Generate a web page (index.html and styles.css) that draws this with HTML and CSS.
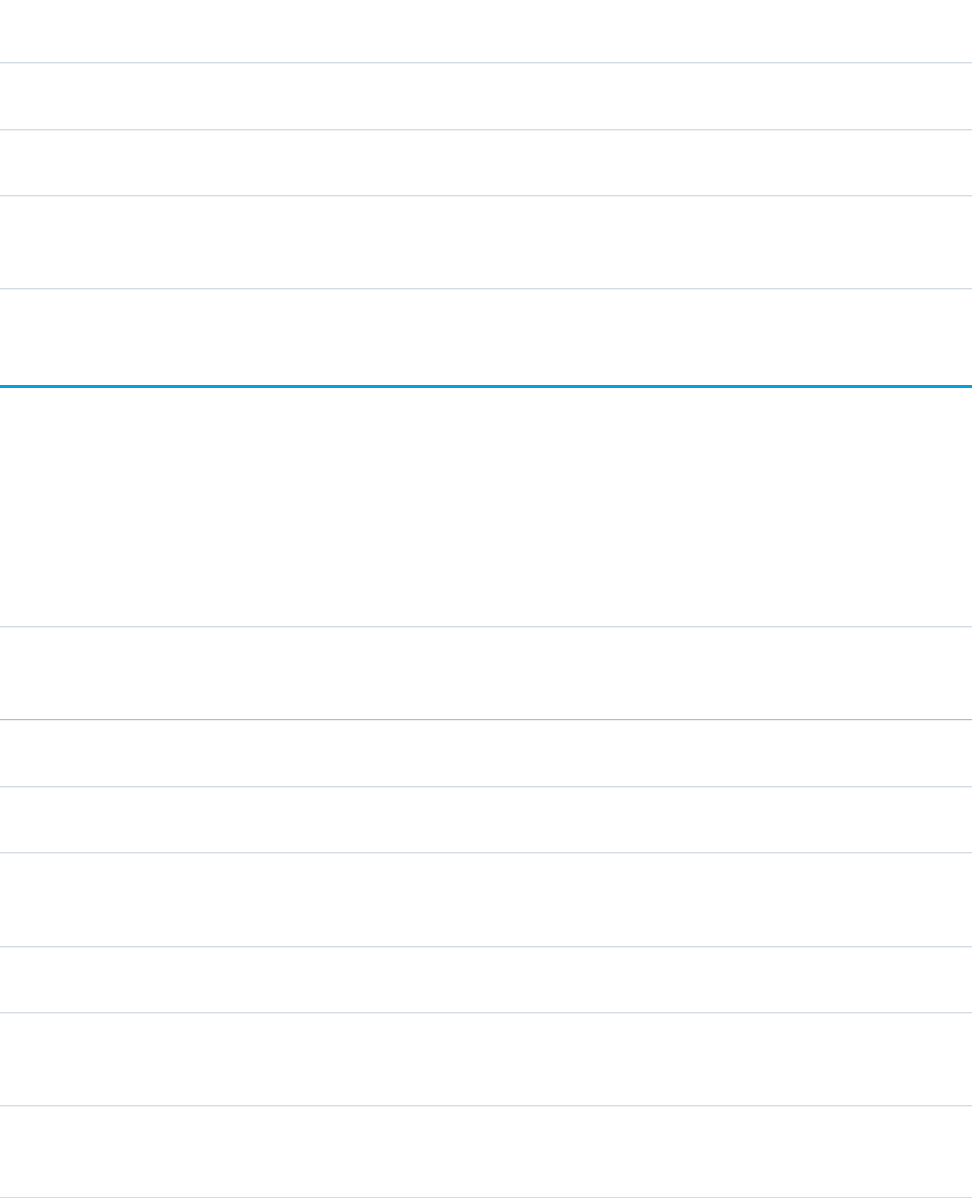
FILE: index.html
```html
<!DOCTYPE html>
<html lang="en">
<head>
<meta charset="utf-8">
<title>Table</title>
<link rel="stylesheet" href="styles.css">
</head>
<body>
<div class="table">
  <div class="row h61"></div>
  <div class="row h66"></div>
  <div class="row h65"></div>
  <div class="row h92"></div>
  <div class="row h95 last-head"></div>
  <div class="row h239"></div>
  <div class="row h92 dark"></div>
  <div class="row h66"></div>
  <div class="row h65"></div>
  <div class="row h93"></div>
  <div class="row h65"></div>
  <div class="row h92"></div>
  <div class="row h91"></div>
</div>
</body>
</html>
```

FILE: styles.css
```css
html, body {
  margin: 0;
  padding: 0;
  background: #ffffff;
  font-family: "Liberation Sans", Arial, sans-serif;
}

.table {
  width: 972px;
  display: flex;
  flex-direction: column;
}

.row {
  border-bottom: 1px solid #d4dbe2;
  box-shadow: 0 1px 0 #eef1f4;
}

.row.last-head {
  border-bottom: 3px solid #00a1e0;
  box-shadow: none;
}

.row.dark {
  border-bottom-color: #b4bcc3;
}

.h61 { height: 62px; }
.h66 { height: 66px; }
.h65 { height: 65px; }
.h91 { height: 91px; }
.h92 { height: 92px; }
.h93 { height: 93px; }
.h95 { height: 96px; }
.h239 { height: 238px; }
```
